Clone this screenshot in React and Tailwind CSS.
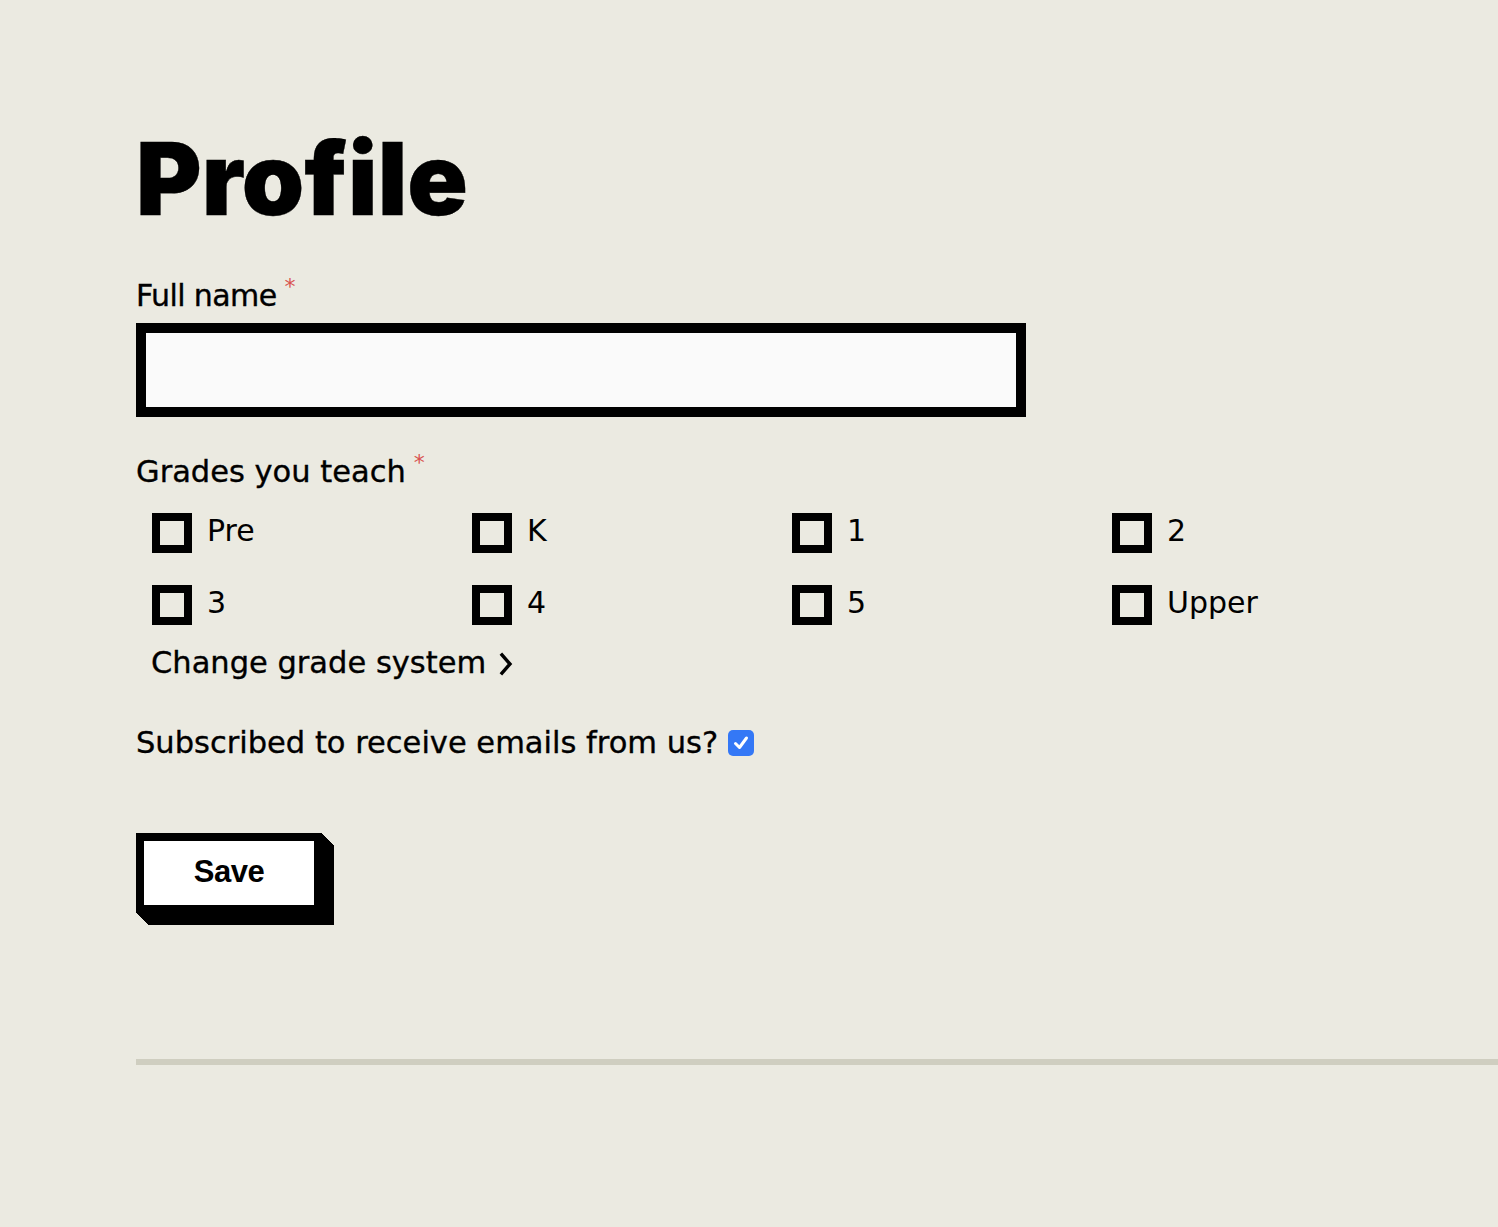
import React from "react";

const grades = ["Pre", "K", "1", "2", "3", "4", "5", "Upper"];

function Asterisk() {
  return (
    <span className="ml-[8px] -mt-[2px] self-start text-[22px] leading-[22px] text-[#d9534f] [font-family:'DejaVu_Sans',sans-serif] [-webkit-text-stroke:0px]">
      *
    </span>
  );
}

export default function App() {
  return (
    <div className="min-h-[1227px] w-full bg-[#ebeae1] [font-family:'DejaVu_Sans',sans-serif] text-black overflow-hidden [-webkit-text-stroke:0.35px_black]">
      <div className="flex flex-col pl-[136px] pt-[129px]">
        <h1 className="text-[100px] leading-[100px] font-black tracking-[0px] [font-family:Inter,sans-serif]">
          Profile
        </h1>

        <label className="mt-[49px] flex h-[36px] items-start text-[30px] leading-[36px] tracking-[-0.6px]">
          <span>Full name</span>
          <Asterisk />
        </label>
        <input
          type="text"
          className="mt-[9px] box-border h-[94px] w-[890px] border-[10px] border-black bg-[#fafafa] px-4 text-[28px] outline-none"
        />

        <div className="mt-[37px] flex h-[36px] items-start text-[30.5px] leading-[36px]">
          <span>Grades you teach</span>
          <Asterisk />
        </div>

        <div className="mt-[23px] grid grid-cols-[repeat(4,320px)] gap-y-[32px] pl-[16px]">
          {grades.map((g) => (
            <label key={g} className="flex h-[40px] items-center gap-[15px]">
              <span className="box-border block h-[40px] w-[40px] border-[8px] border-black" />
              <span className="-mt-[4px] text-[30px] leading-[36px] [-webkit-text-stroke:0px]">{g}</span>
            </label>
          ))}
        </div>

        <div className="mt-[20px] flex h-[36px] items-center pl-[15px] text-[30.5px] leading-[36px]">
          <span>Change grade system</span>
          <svg className="ml-[12px] mt-[2px]" width="16" height="24" viewBox="0 0 16 24" fill="none">
            <path d="M4 3 L12 12 L4 21" stroke="black" strokeWidth="3.4" strokeLinecap="square" />
          </svg>
        </div>

        <div className="mt-[44px] flex h-[36px] items-center text-[30.5px] leading-[36px]">
          <span>Subscribed to receive emails from us?</span>
          <span className="ml-[10px] flex h-[26px] w-[26px] items-center justify-center rounded-[5px] bg-[#3478f6] [-webkit-text-stroke:0px]">
            <svg width="18" height="18" viewBox="0 0 18 18" fill="none">
              <path d="M3.5 9.5 L7.5 13.5 L14.5 4" stroke="white" strokeWidth="3" strokeLinecap="round" strokeLinejoin="round" />
            </svg>
          </span>
        </div>

        <div className="mt-[72px]">
          <button className="box-border h-[80px] w-[186px] border-[8px] border-black bg-white pb-[4px] text-[31px] leading-[31px] font-bold tracking-[-0.5px] [font-family:'Liberation_Sans',Arial,sans-serif] [-webkit-text-stroke:0px] shadow-[1px_1px_0_#000,2px_2px_0_#000,3px_3px_0_#000,4px_4px_0_#000,5px_5px_0_#000,6px_6px_0_#000,7px_7px_0_#000,8px_8px_0_#000,9px_9px_0_#000,10px_10px_0_#000,11px_11px_0_#000,12px_12px_0_#000]">
            Save
          </button>
        </div>

        <div className="mt-[146px] h-[6px] w-full bg-[#cfcec0]" />
      </div>
    </div>
  );
}
